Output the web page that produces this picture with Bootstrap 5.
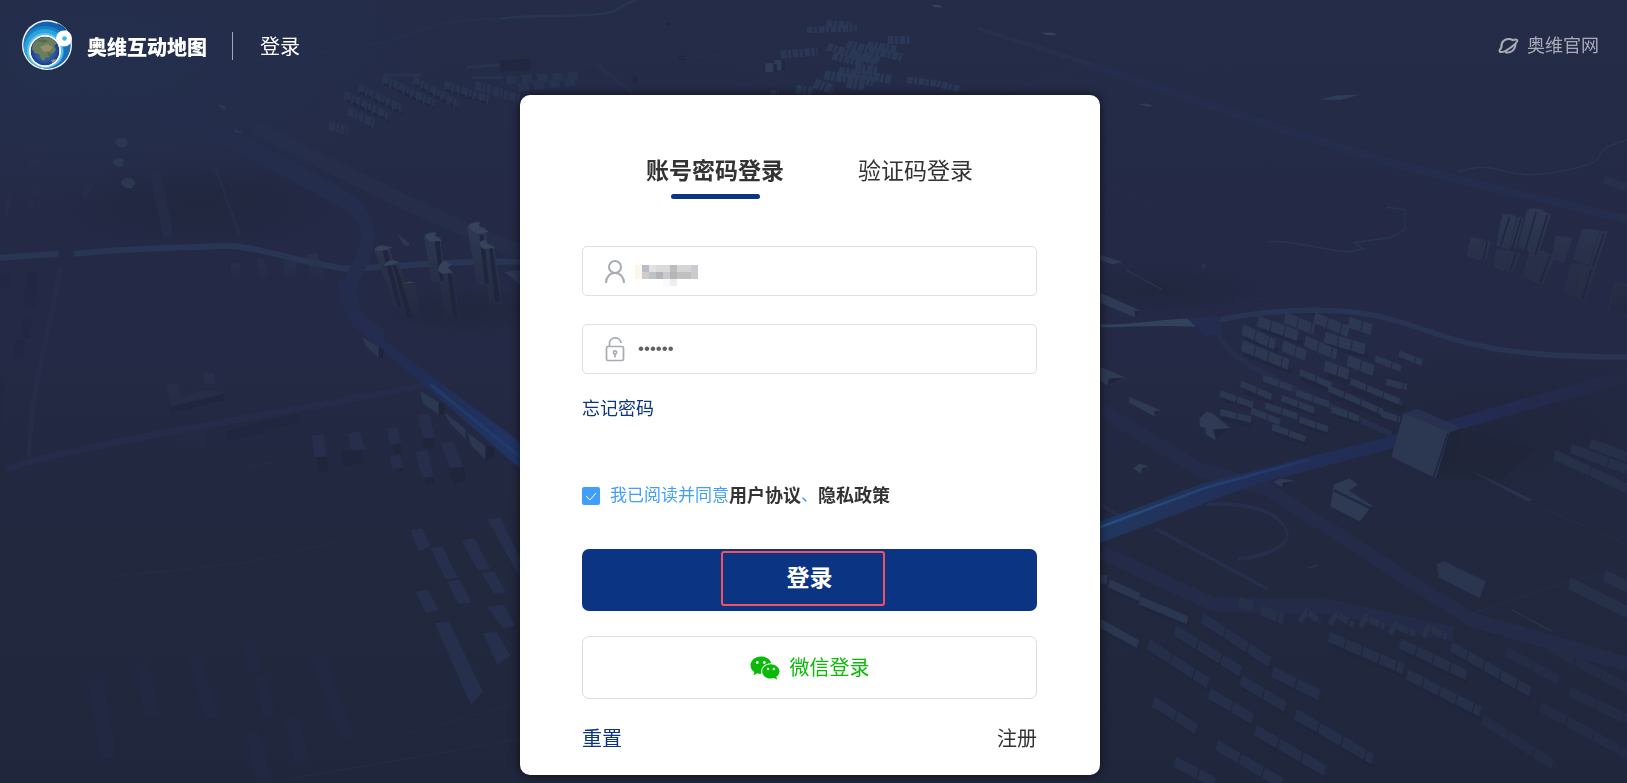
<!DOCTYPE html>
<html lang="zh-CN">
<head>
<meta charset="utf-8">
<meta name="viewport" content="width=device-width, initial-scale=1">
<title>奥维互动地图 - 登录</title>
<link rel="stylesheet" href="https://cdn.jsdelivr.net/npm/bootstrap@5.3.0/dist/css/bootstrap.min.css">
<style>
:root { --navy: #0b3582; --ink: #333; --line: #dcdfe6; }
body { font-family: "Liberation Sans", "Noto Sans CJK SC", sans-serif; background: #232a43; color: var(--ink); line-height: 1.5; }
.scene { position: fixed; inset: 0; width: 100%; height: 100%; z-index: -1; }
.topbar { padding: 20px 28px 25px 22px; }
.brand-name { font-size: 20px; font-weight: 900; line-height: 30px; margin-left: 15px; padding-top: 6px; }
.split { width: 1px; height: 28px; background: #a4a8b4; margin: 2px 27px 0 25px; }
.page-name { font-size: 20px; line-height: 30px; padding-top: 4px; }
.site-link { font-size: 18px; line-height: 28px; padding-top: 2px; color: #a9acb6; }
.stage { padding: 0 7px 8px 0; }
.login-card { max-width: 580px; border: 0; border-radius: 10px; padding: 56px 63px 20px 62px; box-shadow: 0 0 10px rgba(0,0,0,.65); }
.tabs { gap: 74px; padding-bottom: 47px; }
.tab-btn { background: none; border: 0; padding: 0; font-size: 23px; line-height: 40px; color: var(--ink); }
.tab-btn::after { content: ""; display: block; width: 89px; height: 5px; border-radius: 3px; margin: 3px auto 0; }
.tab-btn.active { font-weight: 700; }
.tab-btn.active::after { background: var(--navy); }
.field { height: 50px; border: 1px solid var(--line); border-radius: 5px; padding-left: 20px; position: relative; }
.field + .field { margin-top: 28px; }
.field input { border: 0; outline: 0; background: none; font-size: 17px; color: #606266; padding: 0 12px 0 0; margin-left: 11px; min-width: 0; }
.mosaic { position: absolute; left: 52px; top: 18px; }
.small-link { font-size: 18px; line-height: 26px; color: var(--navy); margin-top: 22px; }
.agree { margin-top: 60px; line-height: 28px; font-size: 17px; color: #409eff; }
.agree a { font-size: 18px; font-weight: 700; color: var(--ink); }
.agree input { appearance: none; width: 18px; height: 18px; margin: 0 10px 0 0; border-radius: 2px; background: #409eff url("data:image/svg+xml,%3Csvg xmlns='http://www.w3.org/2000/svg' viewBox='0 0 18 18'%3E%3Cpath d='M4 9l4 4L14 6' fill='none' stroke='%23fff'/%3E%3C/svg%3E"); }
.btn-login { height: 62px; margin-top: 39px; border-radius: 7px; background: var(--navy); color: #fff; font-size: 23px; font-weight: 700; line-height: 58px; position: relative; }
.btn-login:hover { background: #0d3e96; color: #fff; }
.btn-login, .btn-login:hover { border: 0; }
.focus-frame { position: absolute; left: 139px; top: 2px; width: 164px; height: 55px; border: 2px solid #f4505f; border-radius: 3px; }
.btn-login .caption-text { display: block; height: 62px; }
.btn-wechat { height: 63px; margin-top: 25px; border: 1px solid #ddd; border-radius: 7px; background: #fff; color: #09bb07; font-size: 20px; gap: 10px; }
.foot { margin-top: 24px; font-size: 20px; line-height: 32px; }
.foot button { border: 0; background: none; padding: 0; color: var(--navy); }
.foot a { color: var(--ink); }
</style>
</head>
<body>
<svg class="scene" viewBox="0 0 1627 783" preserveAspectRatio="xMidYMid slice" aria-hidden="true">
  <defs>
    <linearGradient id="sky" x1="0" y1="0" x2="0" y2="1"><stop offset="0" stop-color="#242c48"/><stop offset=".45" stop-color="#242945"/><stop offset=".7" stop-color="#22283e"/><stop offset="1" stop-color="#20263b"/></linearGradient>
    <linearGradient id="glowL" x1="0" y1="0" x2="1" y2="1"><stop offset="0" stop-color="#242c4c"/><stop offset=".5" stop-color="#222d54"/><stop offset="1" stop-color="#203566"/></linearGradient>
    <linearGradient id="glowR" x1="0" y1="0" x2="1" y2="0"><stop offset="0" stop-color="#21375f"/><stop offset=".3" stop-color="#212f58"/><stop offset=".7" stop-color="#222b52"/><stop offset="1" stop-color="#242944"/></linearGradient>
    <linearGradient id="beamR" gradientUnits="userSpaceOnUse" x1="0" y1="0" x2="640" y2="0"><stop offset="0" stop-color="#265287"/><stop offset="1" stop-color="#223466"/></linearGradient>
    <linearGradient id="tower" x1="0" y1="0" x2="0" y2="1"><stop offset="0" stop-color="#2e3852"/><stop offset="1" stop-color="#22283f"/></linearGradient>
    <radialGradient id="dusk"><stop offset="0" stop-color="#1e2437" stop-opacity=".6"/><stop offset="1" stop-color="#1e2437" stop-opacity="0"/></radialGradient>
    <radialGradient id="haze"><stop offset="0" stop-color="#23304f" stop-opacity=".8"/><stop offset="1" stop-color="#23304f" stop-opacity="0"/></radialGradient>
  </defs>
  <rect width="1627" height="783" fill="url(#sky)"/>
  <ellipse cx="100" cy="60" rx="340" ry="150" fill="url(#haze)"/>
  <ellipse cx="200" cy="205" rx="150" ry="45" fill="url(#dusk)"/>
  <ellipse cx="1500" cy="430" rx="230" ry="90" fill="url(#dusk)"/>
  <ellipse cx="1160" cy="290" rx="110" ry="25" fill="url(#dusk)"/>
  <ellipse cx="470" cy="310" rx="90" ry="25" fill="url(#dusk)"/>

  <!-- west side -->
  <g transform="scale(.3444 .4994)">
    <g fill="none" stroke="#252f4c">
      <path d="M0 516L170 508M215 508C400 496 560 496 650 492C740 492 850 522 1000 538C1150 535 1300 522 1510 524" stroke="#283654" stroke-width="12"/>
      <path d="M440 205C600 250 880 350 1010 405C1110 455 1060 510 1020 560C990 620 1040 640 1110 680" stroke="#242d4c" stroke-width="38"/>
      <path d="M740 255C900 310 1200 420 1510 505" stroke-width="32" opacity=".5"/>
      <path d="M450 345L490 475" stroke-width="30" opacity=".5"/>
      <path d="M625 335L695 470M300 160L318 205" stroke-width="9" opacity=".7"/>
      <path d="M175 535C140 680 90 770 84 915" stroke-width="14" opacity=".5"/>
      <path d="M20 938C300 880 800 830 1230 772" stroke="#242c49" stroke-width="14"/>
      <path d="M380 152C700 120 1000 110 1180 70C1300 35 1400 40 1568 32" stroke-width="5"/>
      <path d="M0 230L110 290M620 230L900 330M1370 700L1430 754M870 800L865 740 980 735V658L1150 650M720 935L790 925 800 940 750 955M690 1130L980 1085M1180 1470L1500 1408M840 1560L1510 1480M320 1155L700 1128M20 650L110 655" stroke-width="3" opacity=".5"/>
    </g>
    <path d="M985 560L1035 555C1030 625 1060 650 1110 680L1510 885V938L1060 670C1010 640 980 610 985 560Z" fill="url(#glowL)"/>
    <path d="M1250 770L1510 915" stroke="#213a68" stroke-width="8"/>
    <g fill="url(#tower)">
      <path d="M1087 500h46l50 115h-38zM1115 530h44l52 108h-42zM1232 474h46l15 90h-40zM1272 542h42l22 98h-42zM1357 455h52l20 115h-44zM1392 490h42l26 118h-38zM1168 570h38l14 75h-35z"/>
      <path d="M668 525l28 3 10 48-30-3zM748 516l18 5 15 34-30-2zM825 522l40 2-12 34-28-2zM890 510l30-5 24 58-42-8z" opacity=".5"/>
      <path d="M483 770l32-2 12 28 60-14 67 3-140 35-14-5zM515 870l70-10 12 48-75 5zM590 745l30 2 5 22-30-1z" opacity=".4"/>
    </g>
    <path d="M1110 500l14 0 40 112h-10zM1140 530l12 2 46 104h-14zM1262 480l14 0 12 82h-10zM1300 548l12 0 18 90h-14zM1392 470l12 0 16 98h-12zM1420 496l10 0 22 108h-14z" fill="#1f263b"/>
    <g fill="#36425b">
      <path d="M1087 500q10-10 30-8l22 3-14 5-26 3zM1115 530q10-9 28-9l18 4-18 4-24 4zM1232 472q20-10 35-6l-4 6 20 10-34 2zM1272 542q0-14 20-20l18 8-10 6 15 10-32 2zM1357 455q10-12 38-10l-5 7 30 12-34 4zM1392 490q0-10 18-9l5 6 22 9-34 3zM1168 568l20-5 20 3z"/>
    </g>
    <g fill="#2c3751">
      <path d="M1052 675l48 20 0 22-38-24zM1152 467l36 20v6l-15-2zM1220 783l54 22 0 25-46-22zM1290 825l62 35v18l-45-30zM1358 866l52 28v26l-42-28zM1465 545l45-5v30z"/>
      <path d="M334 283l10-6h20l4 5 4 5-6 5-2 3h-20l-2-4-8-3zM328 321l10-4h18l4 5-3 5 2 5-16 3-10-5-5-3zM351 363l12-6h20l5 5 8 4-8 5-5 6h-20l-3-5-9-4z"/>
      <path d="M630 210h24v12zM678 256l30 12-25-2z"/>
    </g>
    <path d="M1100 695l14 5-3 18-11-2zM1274 806l16 2v20l-16 4zM1410 894l26 2-1 20-25 4z" fill="#1e2438"/>
    <path d="M660 862l206-34 4 18-210 38zM490 815l160-26v12l-155 26z" fill="#20263d"/>
    <path d="M918 915l28-5 8 30-30 8zM990 905l60-5 8 25-60 10zM1140 892l22-4 4 20-20 2zM1225 878l35-4 5 20-30 4zM1300 940l46-4 6 25-30 8zM1150 940l20-3-5 12zM1230 960l30-5v12l-22 4z" fill="#1f253a"/>
    <g fill="#262e4c">
      <path d="M905 872l36-2 6 44-34 2zM1010 868l36-4 12 36-38 2zM1124 858l30-3 10 33-33 2zM1212 832l35-4 16 48-32 2zM1130 914l32-3 8 25-31 2zM1206 905l35-4 18 53-34 2zM1280 888l36-4 30 50-40 2z"/>
    </g>
    <g fill="#262f4c">
      <path d="M1192 1062l34-4 24 36-35 10zM1250 1098l35-4 44 63-35 4zM1340 1082l38-4 45 62-36 3zM1415 1040l38-4 56 80v40zM1300 1165l34-4 36 45-40 4zM1398 1148l38-4 34 43-36 2zM1206 1185l36-4 32 40-36 7zM1415 1215l48-4 32 42-34 6zM1402 1268l40-3 40 48-38 18zM1262 1248l42-3 98 140-35 25z"/>
    </g>
    <g fill="#222842">
      <path d="M253 1362l45-4 42 160h-50zM390 1330l42-4 34 110h-44zM540 1302l38-4 56 140h-40zM703 1288l36-3 22 55-36 2zM735 1353l38-4 32 83-38 2zM820 1438l45-4 35 90h-45zM905 1326l38-4 92 158h-44zM715 1465l38-4 32 95h-50z"/>
      <path d="M5 548l30 2-6 28-29-2zM78 545l34 3-8 70-38-2zM70 632l26 2-10 44-32-4zM48 680l26 4-10 34-26-3zM0 755l15 4-6 108H0z" opacity=".9"/>
    </g>
    <g stroke="#283350" fill="none">
      <path d="M1000 190L1130 235M1040 175L1170 220M1110 158L1260 208M1200 160L1330 210M1290 170L1420 200M1380 170L1510 198M1010 222L1090 248M955 252L1010 262" stroke-width="18" stroke-dasharray="19 3 8 4 12 5"/>
      <path d="M1005 200L1130 243M1045 185L1170 228M1115 168L1260 216M1205 170L1330 218M1295 180L1420 208" stroke="#1f273e" stroke-width="5" stroke-dasharray="14 7"/>
      <path d="M1115 150H1225M1355 135L1540 125M1370 155H1460" stroke-width="6"/>
      <path d="M0 180L290 190M40 200L250 170M80 205L115 250M10 160L200 195" stroke-width="5" stroke-dasharray="8 7" opacity=".3"/>
      <path d="M85 325h30M95 385h20M30 380l-10 50M240 395l30-25M80 412h20" stroke-width="12" opacity=".25"/>
    </g>
  </g>

  <!-- skyline behind the card -->
  <g transform="translate(500 0) scale(.4082 .3333)">
    <path d="M0 56C100 40 220 55 275 35C310 20 300 8 335 0" fill="none" stroke="#273552" stroke-width="7"/>
    <g fill="none" stroke="#2a3856" stroke-dasharray="14 3 8 4">
      <path d="M752 90L875 84M800 70L862 76" stroke-width="20"/>
      <path d="M802 140L920 185M850 132L985 172M900 135L970 148M950 120H1008M815 168L890 188M860 160L930 180" stroke-width="24"/>
      <path d="M688 164L778 154" stroke-width="24"/>
      <path d="M795 225L915 245M830 214L958 238M870 205L925 212M770 250L815 268M725 268L765 275M850 250L895 258" stroke-width="28"/>
      <path d="M997 240L1065 250 1128 268M662 280h20" stroke-width="20"/>
    </g>
    <path d="M650 190h20v26h-20zM672 180h18v30h-18z" fill="#2f3c57"/><path d="M670 192h8v22h-8zM690 184h8v26h-8z" fill="#20283e"/>
    <path d="M0 180L75 178V210L0 215ZM408 66h12v12h-12zM435 167h20v12h-20zM325 230h12v20h-12z" fill="#20273e"/>
    <path d="M15 240L190 228M45 262L185 245" fill="none" stroke="#27324e" stroke-width="25" stroke-dasharray="26 12"/>
    <path d="M240 195L325 280" fill="none" stroke="#262f4c" stroke-width="9"/>
    <path d="M1170 85L1568 240" fill="none" stroke="#262f4c" stroke-width="14"/>
    <path d="M1568 155L1200 285M80 205L540 165L700 245L640 263L570 245" fill="none" stroke="#262f4c" stroke-width="3"/>
    <path d="M1055 15l20 0 10 7h-18zM1325 98l30 0 8 7h-24z" fill="#34445f"/>
  </g>

  <!-- east side -->
  <g transform="translate(1090 0) scale(.3425 .4994)">
    <g fill="none" stroke="#252e4b">
      <path d="M0 130L520 250 900 330 1568 440" stroke="#242e4c" stroke-width="16"/>
      <path d="M30 820L320 940 520 980 1110 1240 1568 1330" stroke-width="30" stroke="#242b49"/>
      <path d="M30 1105L360 1210 700 1215 1060 1270" stroke-width="30" stroke="#242b49"/>
      <path d="M30 1010L90 1035M190 1058L440 1150 520 1180M340 1010C480 1005 560 1030 575 1065C590 1095 500 1115 430 1120" stroke-width="8"/>
      <path d="M380 640C360 690 420 720 600 780L880 870" stroke-width="13"/>
      <path d="M380 640C560 615 760 615 880 640C1050 670 1100 715 1568 715" stroke="#283552" stroke-width="11"/>
      <path d="M165 155L510 118M380 630C400 605 480 600 570 590M60 310L280 330M40 365L230 430M1110 1230L1400 1165 1568 1140M1280 1005L1568 1090M990 510L1568 670M330 280L390 295" stroke-width="4" opacity=".5"/>
      <path d="M520 484C600 480 700 505 760 504L800 498 770 486 880 475 920 460V420L865 415M1075 344C1180 320 1190 350 1290 350C1380 345 1480 330 1485 315C1500 290 1530 290 1568 280" stroke="#273552" stroke-width="3"/>
      <path d="M105 540L210 580M635 1138l28-6M1230 1220L1350 1265" stroke="#2a344d" stroke-width="3"/>
    </g>
    <path d="M668 199l52-8 70-2-60 11zM143 209l20-2 25 5-20 2z" fill="#2d3d59"/>
    <path d="M0 1052L330 968 900 870 1568 740V765L900 895 480 970 0 1095Z" fill="url(#glowR)"/>
    <path d="M0 1063L340 976 640 920" stroke="url(#beamR)" stroke-width="5" fill="none"/>
    <path d="M30 650C140 650 200 640 285 638L310 655C200 650 120 656 30 655Z" fill="#30425c"/>
    <path d="M285 638L375 632 378 670 335 673Z" fill="#242c50"/>
    <!-- hall and neighbours -->
    <path d="M1050 868L1085 857 1300 900 1200 960 1010 958Z" fill="#1f2539" opacity=".6"/>
    <path d="M915 828L955 819 1085 857 1050 865 1010 958 880 915Z" fill="#2c3751"/>
    <path d="M915 828L955 819 1085 857 1050 865Z" fill="#283150"/>
    <path d="M1085 857L1050 868 1010 958 1060 930Z" fill="#1f2539"/><path d="M1045 868L1003 956" stroke="#202840" stroke-width="5"/>
    <path d="M712 970l45-12 25 12-25 12 70 32-35 32-90-32z" fill="#2e3953"/><path d="M712 982l105 35M790 1046l35-32" stroke="#202840" stroke-width="5"/>
    <path d="M320 838l20-14 20 5 50 28-42 25-30-12v-12l-18-5zM30 735l78 22-58 15-20-10zM30 586l115 35-12 15-103-30zM115 795l92 27-18 12-75-28zM125 938l20-10 30 7-25 13zM535 965l20-7 50 5-45 12zM30 510l65 15-30 4-35-8z" fill="#2f3b55"/>
    <path d="M360 860l50-3-42 25zM56 758l50-2-56 16zM130 622l15 0-12 15zM188 824l18-2-18 12zM152 938l22-4-25 14zM562 966l42-3-42 12z" fill="#1f263b"/>
    <path d="M1012 1130l23-6 120 40-17 34-120-42zM1100 938L1290 1000 1280 1005ZM325 535l5-8 8 3-6 8z" fill="#2a3550"/>
    <!-- cast shadows of the long blocks -->
    <g fill="none" stroke="#1f253a" stroke-width="9" opacity=".8">
      <path d="M455 675L548 702M450 708L588 744M500 658L620 686M695 690L812 714M695 752L762 765M618 758L712 785M703 792L862 838M768 782L918 820M450 784L538 806M568 808L660 830M612 852L700 866M542 868L632 888M712 830L790 844M388 798L486 818M388 838L476 850"/>
      <path d="M180 1306L350 1382M258 1276L446 1358M338 1254L530 1338M540 1360L675 1404M450 1376L576 1428M358 1402L480 1452M195 1420L315 1472M610 1446L830 1534M490 1478L695 1560M705 1292L920 1354M915 1304L1105 1366M1062 1310L1290 1398M932 1366L1145 1440M60 1180L150 1205M150 1214L290 1250M38 1262L142 1300"/>
    </g>
    <g fill="none" stroke="#2c3752">
      <path d="M445 660L540 690M443 692L580 730M490 643L610 673M568 636L655 660M655 636L755 664M755 645L822 660M685 675L805 700M628 683L720 710M562 692L630 712M685 732L755 750M752 722L828 742" stroke-width="22" stroke-dasharray="38 3"/>
      <path d="M833 718L908 738M902 708L970 726M612 745L705 772M695 777L855 825M760 763L910 806M865 765L925 775M440 768L530 795M505 757L590 778M602 787L700 810M560 797L655 822M705 820L785 838M612 840L695 860M532 855L630 880M512 812L605 834M380 788L480 812M380 825L470 840M470 822L555 845M850 828L905 840" stroke-width="13" stroke-dasharray="48 3"/>
    </g>
    <g fill="url(#tower)" stroke="#2d3852" stroke-width="1">
      <path d="M1112 475l35 4-10 42-37-10zM1150 482l20 2-15 35-16-2zM1205 430q18-4 40 4l-22 66-36-10zM1250 435l15 2-22 60-15-4zM1277 420q20-6 50 2l-34 82-43-10zM1325 424l20 6-38 82-15-4zM1187 500l40 3-18 40-30-10zM1230 505l25 3-20 36-20-3zM1285 500l42 4-25 60-36-12zM1330 505l26 8-34 55-18-3zM1360 472l48 4-25 50-33-8zM1438 458l50 4-34 68-43-12zM1490 464l20 0-34 72-18-2zM1408 528l40 4-26 60-38-10zM1450 534l25 4-28 62-22-5zM1535 565l33 4v62l-55-12z"/>
    </g>
    <path d="M1160 484l-12 34M1258 438l-24 58M1336 430l-36 80M1244 508l-18 34M1344 512l-30 54M1500 468l-32 66M1464 540l-26 58M1225 434l-26 58M1303 424l-32 76" fill="none" stroke="#1f263b" stroke-width="4"/>
    <g fill="none" stroke="#273049">
      <path d="M1500 360L1568 375M1548 436h20" stroke-width="16"/>
      <path d="M1355 910L1568 978M1405 898L1568 940M1460 888L1568 915" stroke-width="20" stroke-dasharray="110 3"/>
      <path d="M1400 1168L1568 1225M1502 1152L1568 1175" stroke-width="24"/>
      <path d="M55 1168L145 1196M145 1202L285 1242M30 1248L140 1290M30 1160h20" stroke="#2b3651" stroke-width="17"/>
      <path d="M170 1290L345 1368M248 1262L440 1345M328 1238L525 1326M533 1345L670 1392M440 1362L570 1415M348 1388L475 1440M185 1404L310 1460M600 1430L825 1520M483 1462L690 1545M370 1492L560 1568M248 1525L365 1568" stroke="#262f4a" stroke-width="22" stroke-dasharray="70 4"/>
      <path d="M697 1275L915 1340M905 1288L1100 1352M1055 1295L1285 1385M925 1350L1140 1425M435 1206L475 1213M500 1222L565 1240" stroke="#263049" stroke-width="21" stroke-dasharray="48 4"/>
      <path d="M1215 1305L1370 1362M1340 1295L1568 1378M1400 1385L1568 1440M1315 1415L1568 1510M1145 1440L1350 1530" stroke="#242c45" stroke-width="21" stroke-dasharray="80 3"/>
      <path d="M612 1245l20-20 40 20M700 1250l20-20 50 22M790 1255l15-18 55 18M875 1270l15-18 60 18M972 1275l15-18 55 18" stroke="#273149" stroke-width="14" stroke-dasharray="30 5"/>
    </g>
  </g>
</svg>

<header class="topbar d-flex align-items-center justify-content-between">
  <div class="d-flex align-items-center text-white">
    <svg width="50" height="50" viewBox="0 0 50 50" role="img" aria-label="奥维">
      <defs>
        <clipPath id="rim"><circle cx="25" cy="25" r="23.500"/></clipPath>
        <clipPath id="ball"><circle cx="23" cy="31" r="14.500"/></clipPath>
        <radialGradient id="sea"><stop offset="0" stop-color="#456f86"/><stop offset=".65" stop-color="#2c5aa0"/><stop offset="1" stop-color="#183b91"/></radialGradient>
      </defs>
      <circle cx="25" cy="25" r="25" fill="#f4f7fa"/>
      <g clip-path="url(#rim)">
        <rect width="50" height="50" fill="#1262b1"/>
        <circle cx="23" cy="30" r="24" fill="#1a80c6"/>
        <circle cx="23" cy="30" r="21" fill="#29a4dd"/>
        <circle cx="23" cy="31" r="18" fill="#61bfeb"/>
        <path d="M41 26q4 13-9 20l-10 4h28V24z" fill="#1a70bb"/>
        <circle cx="23" cy="31" r="16" fill="#fff"/>
      </g>
      <g clip-path="url(#ball)">
        <circle cx="23" cy="31" r="14.500" fill="url(#sea)"/>
        <path d="M11 24q5-7 13-7 7 0 11 6l-3 3 2 4-3 3-3 2-1 3-3-1-2 4-3-2-2-5-4-1-3-4z" fill="#6b7d5b"/>
        <path d="M18 27l7-3 6 3-3 4-6 1zM29 40l5-1 1 4-4 1z" fill="#958f6d"/>
        <path d="M15 21q6-3 12 0l-5 2zM25 32l4 1-2 4z" fill="#4c7048"/>
      </g>
      <path d="M35 3q8 3 11 9l-2-2-2 1-3-4h-3z" fill="#14579f"/>
      <circle cx="42" cy="18.500" r="8" fill="#fff"/><circle cx="42.500" cy="18.500" r="2.300" fill="#43b5e6"/>
    </svg>
    <span class="brand-name">奥维互动地图</span>
    <span class="split"></span>
    <span class="page-name">登录</span>
  </div>
  <a href="#" class="site-link d-flex align-items-center text-decoration-none">
    <svg class="me-2" width="21" height="18" viewBox="0 0 21 18" fill="none" stroke="currentColor" stroke-width="2" aria-hidden="true"><path d="M3.500 11C2.500 5 7 1.500 11.500 2C14 2.300 15 3.200 15.500 3.500M17.500 7C17.500 13 12 17 7 15"/><path d="M3.500 10.500C1 13 1 15 3 15C7 15.500 17 8 19 4.500C20 2.500 18 2 15 3.200"/></svg>
    <span>奥维官网</span>
  </a>
</header>

<main class="stage">
  <form class="login-card card mx-auto" onsubmit="return false">
    <div class="tabs d-flex justify-content-center" role="tablist">
      <button type="button" class="tab-btn active" role="tab" aria-selected="true">账号密码登录</button>
      <button type="button" class="tab-btn" role="tab" aria-selected="false">验证码登录</button>
    </div>
    <div class="field d-flex align-items-center">
      <label for="account" class="d-flex"><svg width="24" height="26" viewBox="0 0 24 26" fill="none" stroke="#a8abb2" stroke-width="2" role="img" aria-label="账号"><circle cx="12" cy="9" r="6"/><path d="M3 25C3 19 7 15 12 15S21 19 21 25"/></svg></label>
      <input id="account" type="text" class="flex-grow-1" autocomplete="username">
      <svg class="mosaic" width="63" height="21" viewBox="0 0 9 3" shape-rendering="crispEdges" aria-hidden="true">
        <path fill="#fbf6f0" d="M0 0h1v2H0z"/><path fill="#b9bcc4" d="M1 0h1v1H1z"/><path fill="#e1e3e3" d="M2 0h1v1H2z"/><path fill="#d8dadc" d="M3 0h2v1H3z"/><path fill="#bcbcbc" d="M5 0h1v1H5z"/><path fill="#d5d5d6" d="M6 0h2v1H6z"/><path fill="#c9cbd0" d="M8 0h1v2H8z"/>
        <path fill="#d0cccc" d="M1 1h1v1H1z"/><path fill="#bfc1c6" d="M2 1h1v1H2z"/><path fill="#b4b4b4" d="M3 1h1v1H3z"/><path fill="#c8cacf" d="M4 1h1v1H4z"/><path fill="#b5b5b5" d="M5 1h1v1H5z"/><path fill="#c1c0be" d="M6 1h2v1H6z"/><path fill="#fbfaf8" d="M4 2h1v1H4z"/><path fill="#eceef2" d="M5 2h1v1H5z"/>
      </svg>
    </div>
    <div class="field d-flex align-items-center">
      <label for="secret" class="d-flex"><svg width="24" height="26" viewBox="0 0 24 26" fill="none" stroke="#a8abb2" stroke-width="1.700" role="img" aria-label="密码"><rect x="3.500" y="10.500" width="17" height="14" rx="1.500"/><path d="M6.500 10.500V7.500C6.500 0 17.500 0 18 7"/><circle cx="12" cy="16.500" r="1.600"/><path d="M12 18v3.500"/></svg></label>
      <input id="secret" type="password" class="flex-grow-1" value="123456" autocomplete="current-password">
    </div>
    <a href="#" class="small-link align-self-start text-decoration-none">忘记密码</a>
    <div class="agree d-flex align-items-center">
      <input type="checkbox" id="agree" checked>
      <label for="agree">我已阅读并同意</label><a href="#" class="text-decoration-none">用户协议</a><span>、</span><a href="#" class="text-decoration-none">隐私政策</a>
    </div>
    <button type="submit" class="btn btn-login w-100 p-0"><span class="caption-text">登录</span><span class="focus-frame"></span></button>
    <button type="button" class="btn btn-wechat w-100 p-0 d-flex align-items-center justify-content-center">
      <svg width="30" height="24" viewBox="0 0 30 24" fill="#09bb07" aria-hidden="true"><path d="M11 .5C5 .5.500 4.500.500 9.300C.500 12.200 2 14.500 4.300 16L3.300 19.300L7.200 17.300C8.700 17.700 10 17.900 11.300 17.800C9.900 12 14.500 7.400 21.300 7.300C20.200 3.200 16 .5 11 .5Z"/><path d="M20.800 8.200C16 8.200 12.200 11.400 12.200 15.400S16 22.500 20.800 22.500C21.900 22.500 23 22.300 24 22L27.200 23.700L26.300 20.800C28.200 19.500 29.500 17.600 29.500 15.400C29.500 11.500 25.600 8.200 20.800 8.200Z"/><g fill="#fff"><circle cx="7.300" cy="6.500" r="1.400"/><circle cx="14.300" cy="6.500" r="1.400"/><circle cx="18" cy="13" r="1.200"/><circle cx="23.800" cy="13" r="1.200"/></g></svg>
      <span>微信登录</span>
    </button>
    <div class="foot d-flex justify-content-between">
      <button type="reset">重置</button>
      <a href="#" class="text-decoration-none">注册</a>
    </div>
  </form>
</main>
<script src="https://cdn.jsdelivr.net/npm/bootstrap@5.3.0/dist/js/bootstrap.bundle.min.js"></script>
</body>
</html>
